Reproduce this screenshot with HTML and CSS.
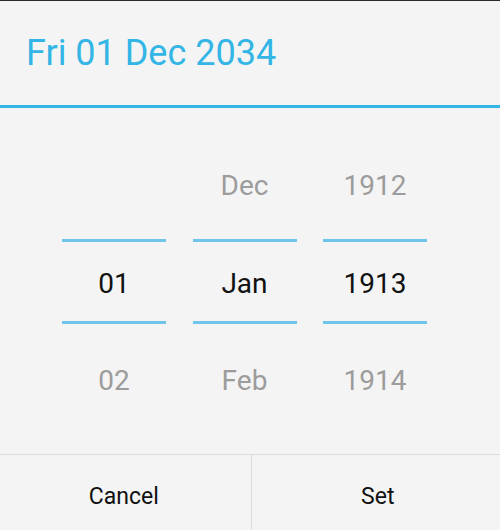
FILE: index.html
```html
<!DOCTYPE html>
<html>
<head>
<meta charset="utf-8">
<link rel="stylesheet" href="styles.css">
</head>
<body>
<div class="dialog">
  <div class="header">Fri 01 Dec 2034</div>
  <div class="pickers">
    <div class="col">
      <div class="item prev"></div>
      <div class="line top"></div>
      <div class="item cur">01</div>
      <div class="line"></div>
      <div class="item next">02</div>
    </div>
    <div class="col">
      <div class="item prev">Dec</div>
      <div class="line top"></div>
      <div class="item cur">Jan</div>
      <div class="line"></div>
      <div class="item next">Feb</div>
    </div>
    <div class="col">
      <div class="item prev">1912</div>
      <div class="line top"></div>
      <div class="item cur">1913</div>
      <div class="line"></div>
      <div class="item next">1914</div>
    </div>
  </div>
  <div class="footer">
    <div class="btn">Cancel</div>
    <div class="btn right">Set</div>
  </div>
</div>
</body>
</html>
```
FILE: styles.css
```css
html, body {
  margin: 0;
  padding: 0;
  background: #f4f4f4;
  height: 530px;
  overflow: hidden;
}
.dialog {
  font-family: Roboto, "Noto Sans", sans-serif;
  border-top: 1px solid #2a2a2a;
  height: 529px;
  display: flex;
  flex-direction: column;
}
.header {
  height: 107px;
  flex: none;
  box-sizing: border-box;
  padding-left: 26px;
  display: flex;
  align-items: center;
  font-size: 36px;
  color: #33b5e5;
  border-bottom: 3px solid #33b5e5;
}
.pickers {
  height: 346px;
  flex: none;
  display: flex;
  gap: 26.5px;
  padding-left: 62px;
  box-sizing: border-box;
}
.col {
  width: 104px;
  display: flex;
  flex-direction: column;
  padding-top: 52px;
}
.item {
  height: 50px;
  line-height: 52px;
  text-align: center;
  font-size: 28px;
  color: #9c9c9c;
}
.line {
  height: 3px;
  background: #6ec4e9;
}
.line.top {
  margin-top: 29px;
}
.item.cur {
  height: 79px;
  line-height: 83px;
  color: #111;
}
.item.next {
  margin-top: 31px;
}
.footer {
  flex: 1;
  display: flex;
  border-top: 1px solid #dcdcdc;
}
.btn {
  flex: 251 0 0;
  text-align: center;
  font-size: 23px;
  color: #111;
  padding-top: 28px;
  padding-right: 4px;
  border-right: 1px solid #dcdcdc;
}
.btn.right {
  flex: 248 0 0;
  padding-right: 0;
  padding-left: 3px;
  border-right: none;
}
```
